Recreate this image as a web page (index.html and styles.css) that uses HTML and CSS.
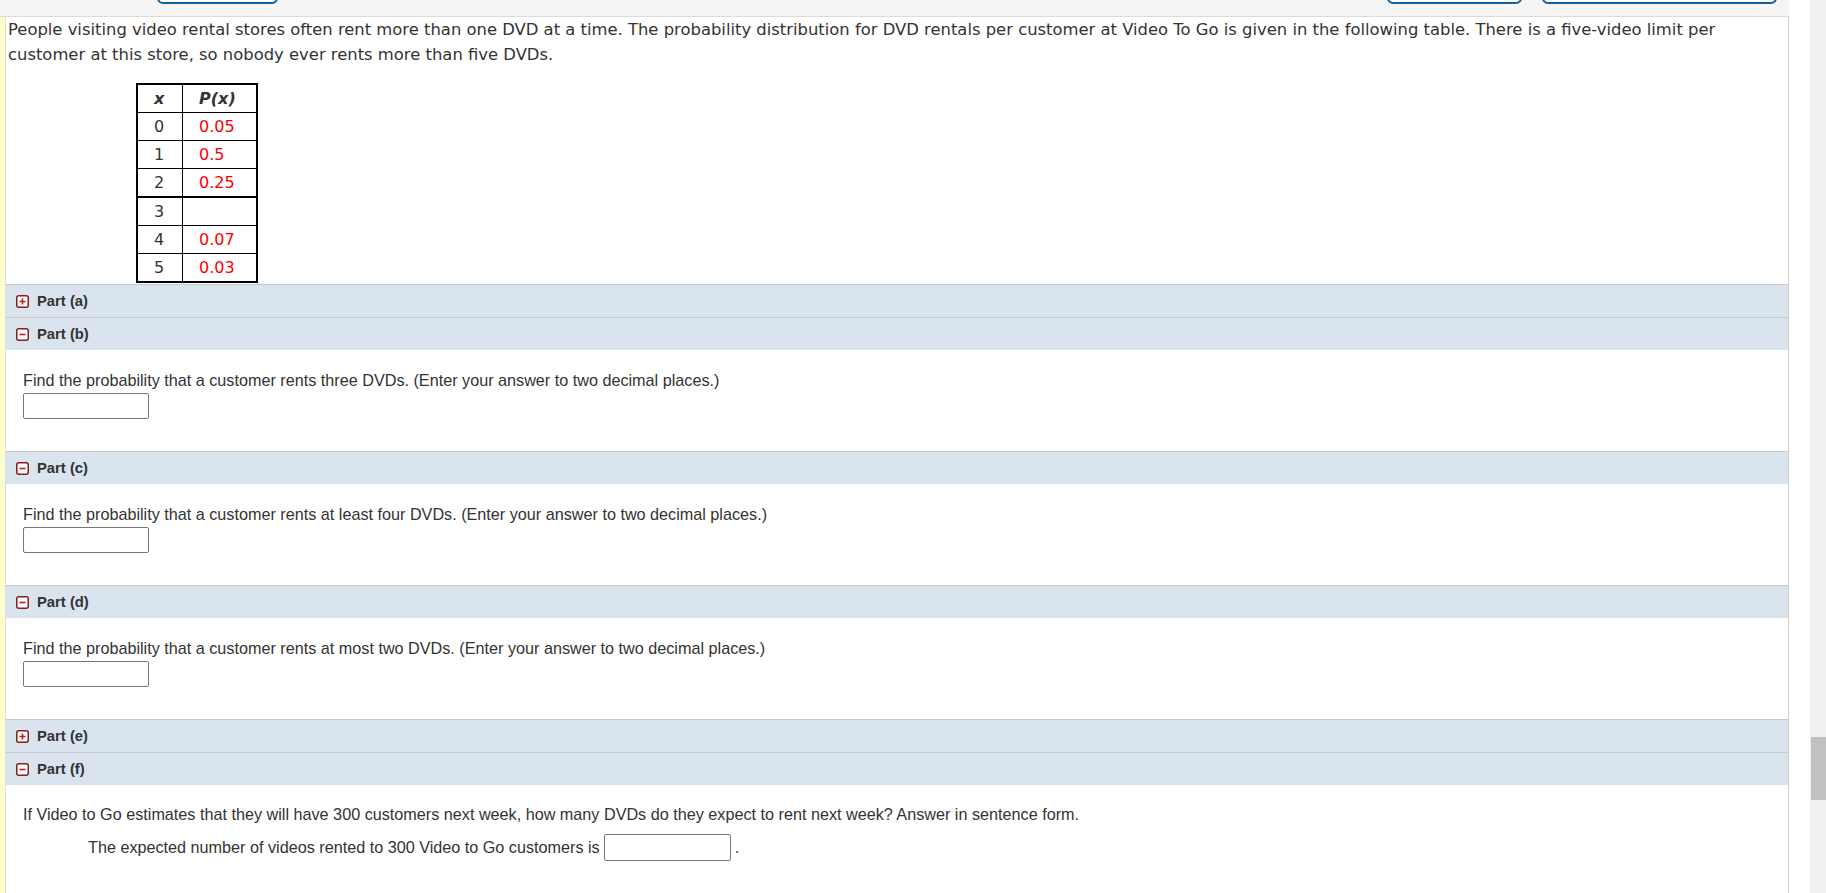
FILE: index.html
```html
<!DOCTYPE html>
<html lang="en">
<head>
<meta charset="utf-8">
<title>Video To Go – DVD rentals</title>
<link rel="stylesheet" href="styles.css">
</head>
<body>
<div class="screen">
  <div class="page">
    <div class="toolbar">
      <span class="tb-btn tb-btn-a"></span>
      <span class="tb-btn tb-btn-b"></span>
      <span class="tb-btn tb-btn-c"></span>
    </div>
    <div class="frame">
      <div class="margin-strip"></div>
      <div class="question">
        <p class="intro">People visiting video rental stores often rent more than one DVD at a time. The probability distribution for DVD rentals per customer at Video To Go is given in the following table. There is a five-video limit per customer at this store, so nobody ever rents more than five DVDs.</p>

        <table class="dist">
          <thead>
            <tr><th class="col-x"><i>x</i></th><th class="col-p"><i>P</i>(<i>x</i>)</th></tr>
          </thead>
          <tbody>
            <tr><td>0</td><td class="val">0.05</td></tr>
            <tr><td>1</td><td class="val">0.5</td></tr>
            <tr><td>2</td><td class="val">0.25</td></tr>
            <tr class="split"><td>3</td><td class="val"></td></tr>
            <tr><td>4</td><td class="val">0.07</td></tr>
            <tr><td>5</td><td class="val">0.03</td></tr>
          </tbody>
        </table>

        <section class="part">
          <div class="part-head">
            <svg class="toggle" viewBox="0 0 13 13" width="13" height="13"><rect x="0.75" y="0.75" width="11.5" height="11.5" rx="2" class="toggle-box"/><path d="M3.5 6.5h6M6.5 3.5v6" class="toggle-sign"/></svg>
            <span>Part (a)</span>
          </div>
        </section>

        <section class="part">
          <div class="part-head">
            <svg class="toggle" viewBox="0 0 13 13" width="13" height="13"><rect x="0.75" y="0.75" width="11.5" height="11.5" rx="2" class="toggle-box"/><path d="M3.5 6.5h6" class="toggle-sign"/></svg>
            <span>Part (b)</span>
          </div>
          <div class="part-body">
            <p class="prompt">Find the probability that a customer rents three DVDs. (Enter your answer to two decimal places.)</p>
            <input class="answer" type="text">
          </div>
        </section>

        <section class="part">
          <div class="part-head">
            <svg class="toggle" viewBox="0 0 13 13" width="13" height="13"><rect x="0.75" y="0.75" width="11.5" height="11.5" rx="2" class="toggle-box"/><path d="M3.5 6.5h6" class="toggle-sign"/></svg>
            <span>Part (c)</span>
          </div>
          <div class="part-body">
            <p class="prompt">Find the probability that a customer rents at least four DVDs. (Enter your answer to two decimal places.)</p>
            <input class="answer" type="text">
          </div>
        </section>

        <section class="part">
          <div class="part-head">
            <svg class="toggle" viewBox="0 0 13 13" width="13" height="13"><rect x="0.75" y="0.75" width="11.5" height="11.5" rx="2" class="toggle-box"/><path d="M3.5 6.5h6" class="toggle-sign"/></svg>
            <span>Part (d)</span>
          </div>
          <div class="part-body">
            <p class="prompt">Find the probability that a customer rents at most two DVDs. (Enter your answer to two decimal places.)</p>
            <input class="answer" type="text">
          </div>
        </section>

        <section class="part">
          <div class="part-head">
            <svg class="toggle" viewBox="0 0 13 13" width="13" height="13"><rect x="0.75" y="0.75" width="11.5" height="11.5" rx="2" class="toggle-box"/><path d="M3.5 6.5h6M6.5 3.5v6" class="toggle-sign"/></svg>
            <span>Part (e)</span>
          </div>
        </section>

        <section class="part">
          <div class="part-head">
            <svg class="toggle" viewBox="0 0 13 13" width="13" height="13"><rect x="0.75" y="0.75" width="11.5" height="11.5" rx="2" class="toggle-box"/><path d="M3.5 6.5h6" class="toggle-sign"/></svg>
            <span>Part (f)</span>
          </div>
          <div class="part-body part-body-last">
            <p class="prompt">If Video to Go estimates that they will have 300 customers next week, how many DVDs do they expect to rent next week? Answer in sentence form.</p>
            <p class="sentence">The expected number of videos rented to 300 Video to Go customers is <input class="answer answer-inline" type="text"> .</p>
          </div>
        </section>
      </div>
    </div>
  </div>
  <div class="gutter"></div>
  <div class="scroll-track"><div class="scroll-thumb"></div></div>
</div>
</body>
</html>
```

FILE: styles.css
```css
html, body {
  margin: 0;
  padding: 0;
  background: #fff;
}

.screen {
  display: flex;
  height: 893px;
  overflow: hidden;
}

.page {
  width: 1789px;
  flex: none;
  display: flex;
  flex-direction: column;
}

/* toolbar scrolled mostly out of view: only the button bottoms show */
.toolbar {
  height: 16px;
  flex: none;
  display: flex;
  align-items: flex-start;
  padding: 0 12px 0 157px;
  background: #f5f5f5;
  border-bottom: 1px solid #dcdcdc;
  overflow: hidden;
}

.tb-btn {
  display: block;
  flex: none;
  height: 26px;
  margin-top: -22px;
  box-sizing: border-box;
  border: 2px solid #12609c;
  border-radius: 6px;
  background: #fff;
}

.tb-btn-a { width: 121px; }
.tb-btn-b { width: 135px; margin-left: auto; }
.tb-btn-c { width: 235px; margin-left: 20px; }

.frame {
  flex: 1;
  display: flex;
  min-height: 0;
}

.margin-strip {
  width: 5px;
  flex: none;
  background: #ffffcc;
  border-right: 1px solid #dedede;
}

.question {
  flex: 1;
  border-right: 1px solid #cfcfcf;
  background: #fff;
  color: #333;
}

.intro {
  margin: 0;
  padding: 0 20px 0 2px;
  font-family: "DejaVu Sans", Verdana, sans-serif;
  font-size: 16.4px;
  line-height: 25px;
  color: #333;
}

/* probability distribution table */
.dist {
  margin: 16px 0 1px 130px;
  border-collapse: collapse;
  border: 2px solid #000;
  font-family: "DejaVu Sans", Verdana, sans-serif;
  font-size: 16px;
  color: #333;
}

.dist th,
.dist td {
  border: 1px solid #000;
  height: 27px;
  padding: 0 0 0 16px;
  text-align: left;
  vertical-align: middle;
}

.dist th {
  font-weight: bold;
  font-style: italic;
}

.dist .col-x { width: 28px; }
.dist .col-p { width: 57px; }

.dist .val { color: #ff0000; }

.dist .split td { border-top: 2px solid #000; }

/* collapsible parts */
.part-head {
  height: 32px;
  display: flex;
  align-items: center;
  gap: 8px;
  padding-left: 10px;
  background: #d9e4ee;
  border-top: 1px solid #c8c8c8;
  font-family: "Liberation Sans", Arial, sans-serif;
  font-weight: bold;
  font-size: 14.8px;
  color: #333;
}

.toggle { flex: none; display: block; }

.toggle-box {
  fill: #fff;
  stroke: #8c1c1c;
  stroke-width: 1.5;
}

.toggle-sign {
  stroke: #c41a1a;
  stroke-width: 1.6;
  fill: none;
}

.part-body {
  padding: 20px 0 32px 17px;
  font-family: "Liberation Sans", Arial, sans-serif;
  font-size: 16.2px;
  color: #333;
}

.prompt {
  margin: 0;
  line-height: 20px;
}

.answer {
  display: block;
  margin: 3px 0 0;
  width: 126px;
  height: 26px;
  box-sizing: border-box;
  border: 1px solid #767676;
  border-radius: 2px;
  background: #fff;
  padding: 0 4px;
  font: inherit;
}

.part-body-last { padding-top: 19px; }

.sentence {
  margin: 10px 0 0 65px;
  line-height: 27px;
  display: flex;
  align-items: center;
  gap: 4px;
}

.answer-inline {
  display: inline-block;
  margin: 0;
  width: 127px;
  height: 27px;
}

.gutter {
  width: 21px;
  flex: none;
}

.scroll-track {
  width: 16px;
  flex: none;
  background: #f1f1f1;
}

.scroll-thumb {
  margin: 737px 0 0 1px;
  height: 63px;
  background: #c1c1c1;
}
```
